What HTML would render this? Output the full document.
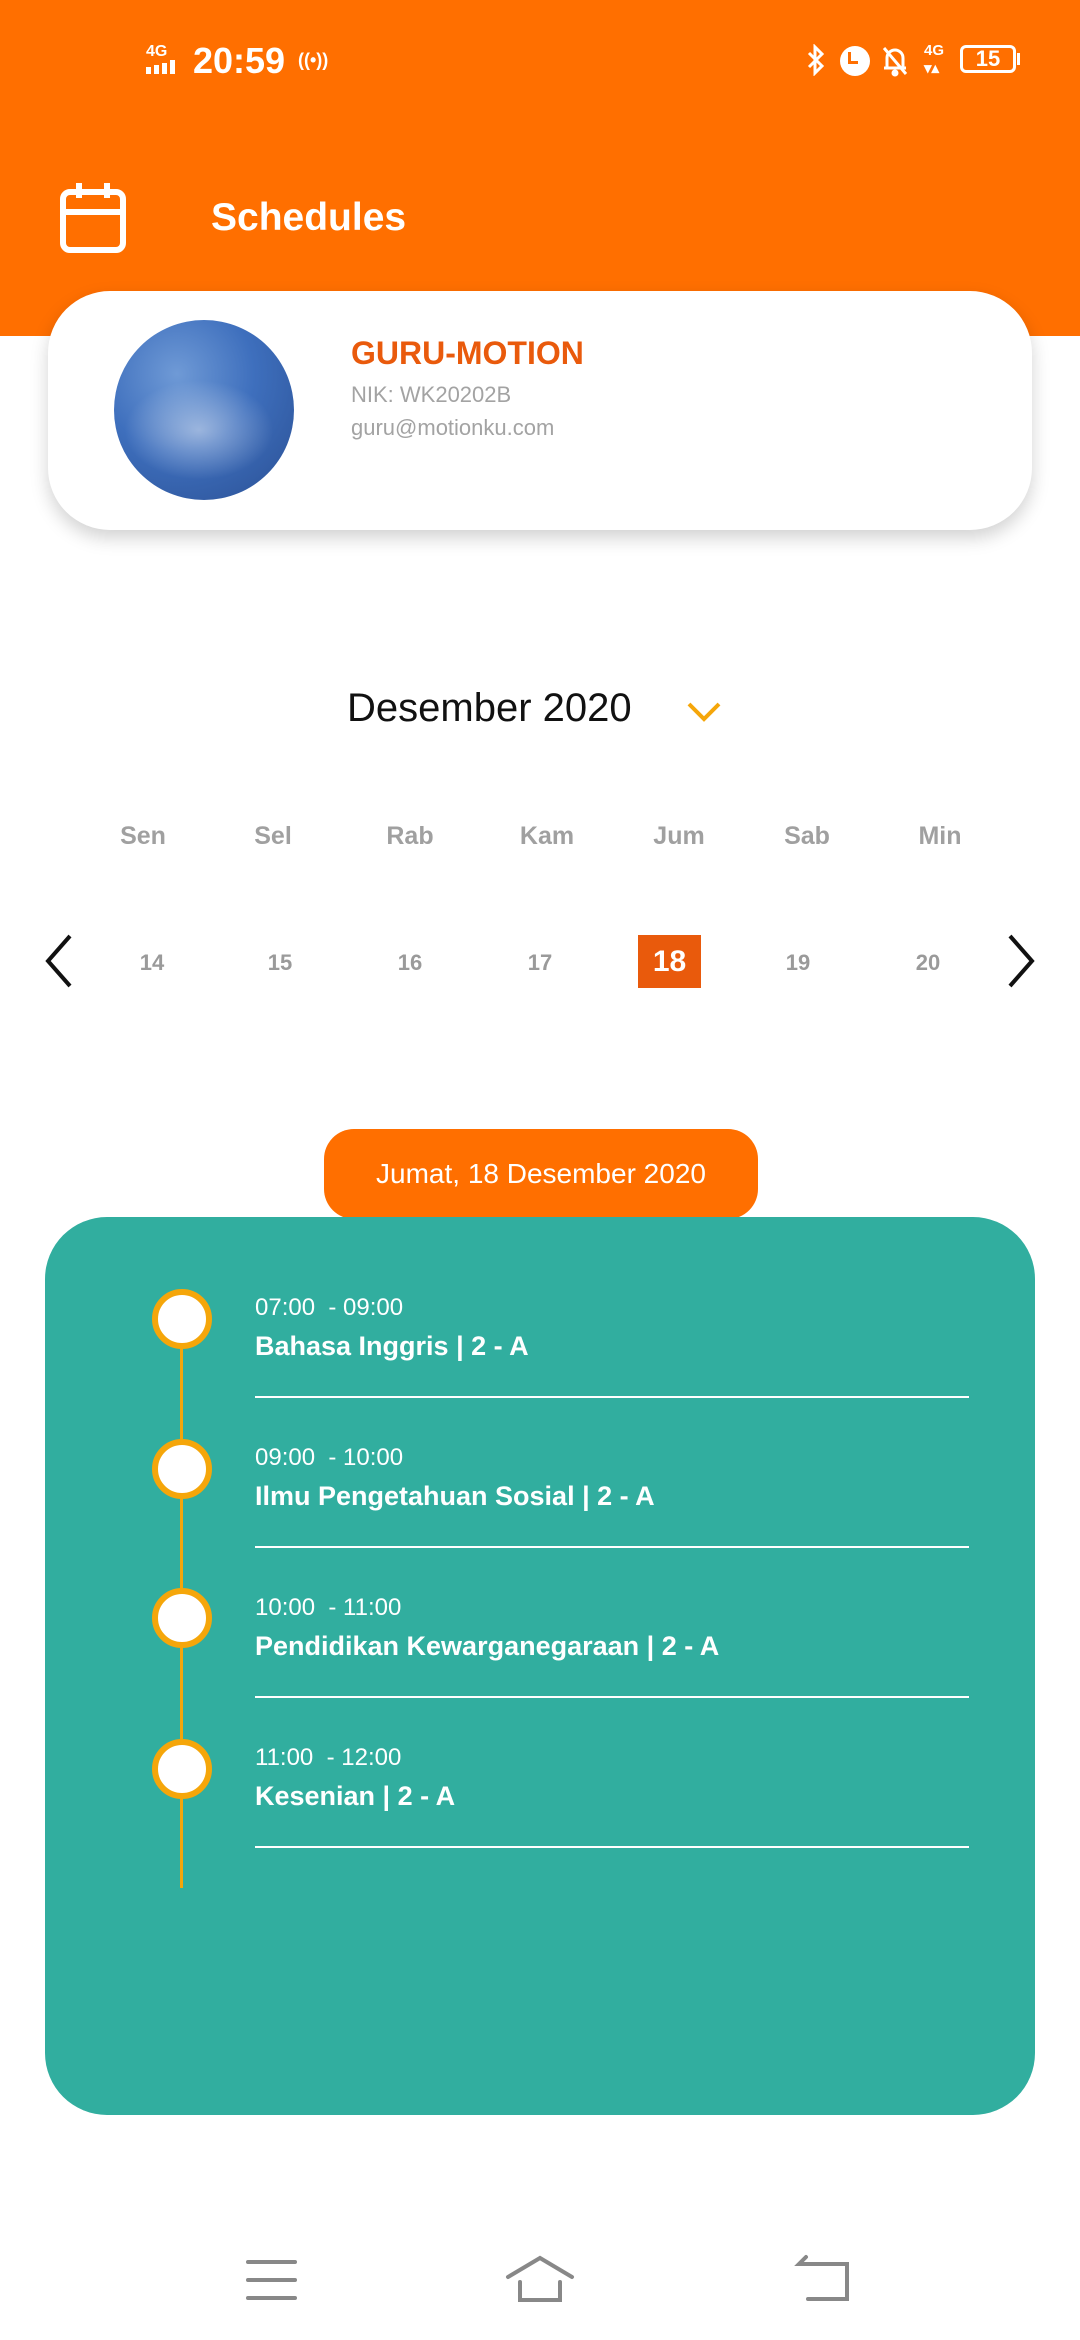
<!DOCTYPE html>
<html><head><meta charset="utf-8"><style>
*{margin:0;padding:0;box-sizing:border-box}
body{width:1080px;height:2340px;position:relative;background:#fff;font-family:"Liberation Sans",sans-serif;overflow:hidden}
.a{position:absolute}
.hdr{left:0;top:0;width:1080px;height:336px;background:#ff6f00}
.card{left:48px;top:291px;width:984px;height:239px;background:#fff;border-radius:62px;box-shadow:0 8px 18px rgba(0,0,0,.18)}
.day{top:822px;width:100px;margin-left:-50px;text-align:center;font-size:25px;font-weight:bold;color:#a0a0a0}
.dt{top:950px;width:80px;margin-left:-40px;text-align:center;font-size:22px;font-weight:bold;color:#9a9a9a}
.teal{left:45px;top:1217px;width:990px;height:898px;background:#31ae9f;border-radius:62px}
.circ{left:152px;width:60px;height:60px;border-radius:50%;background:#fff;border:6px solid #f5a60a}
.tm{left:255px;font-size:24px;color:#fff}
.sb{left:255px;font-size:27px;color:#fff;font-weight:bold}
.ln{left:255px;width:714px;height:2px;background:#fff}
</style></head><body>
<div class="a hdr"></div>
<div class="a" style="left:146px;top:44px;color:#fff;font-size:16px;font-weight:bold;line-height:16px">4G</div>
<div class="a" style="left:146px;top:60px;width:32px;height:14px">
<div class="a" style="left:0;top:7px;width:5px;height:7px;background:#fff"></div>
<div class="a" style="left:8px;top:5px;width:5px;height:9px;background:#fff"></div>
<div class="a" style="left:16px;top:3px;width:5px;height:11px;background:#fff"></div>
<div class="a" style="left:24px;top:0;width:5px;height:14px;background:#fff"></div></div>
<div class="a" style="left:193px;top:40px;color:#fff;font-size:36px;font-weight:bold">20:59</div>
<div class="a" style="left:298px;top:50px;color:#fff;font-size:18px;font-weight:bold">((•))</div>
<svg class="a" style="left:806px;top:44px" width="20" height="32" fill="none" stroke="#fff" stroke-width="3"><polyline points="3,9 16,22 9,29 9,3 16,10 3,23"/></svg>
<div class="a" style="left:840px;top:46px;width:30px;height:30px;border-radius:50%;background:#fff"></div>
<div class="a" style="left:848px;top:52px;width:10px;height:12px;border-left:3px solid #ff6f00;border-bottom:3px solid #ff6f00"></div>
<svg class="a" style="left:880px;top:44px" width="30" height="34" fill="none" stroke="#fff" stroke-width="3"><path d="M7,24 V14 a8,8 0 0 1 16,0 V24 H4 M26,24 H24"/><line x1="4" y1="4" x2="26" y2="30"/><circle cx="15" cy="29" r="2" fill="#fff"/></svg>
<div class="a" style="left:924px;top:42px;color:#fff;font-size:15px;font-weight:bold">4G<br>▾▴</div>
<div class="a" style="left:960px;top:45px;width:56px;height:28px;border:3px solid #fff;border-radius:6px;color:#fff;font-size:22px;font-weight:bold;text-align:center;line-height:22px">15</div>
<div class="a" style="left:1017px;top:53px;width:3px;height:12px;background:#fff"></div>
<svg class="a" style="left:58px;top:180px" width="72" height="74" viewBox="0 0 72 74"><rect x="5" y="12" width="60" height="58" rx="7" fill="none" stroke="#fff" stroke-width="6"/><line x1="5" y1="32" x2="65" y2="32" stroke="#fff" stroke-width="6"/><line x1="21" y1="3" x2="21" y2="18" stroke="#fff" stroke-width="6"/><line x1="49" y1="3" x2="49" y2="18" stroke="#fff" stroke-width="6"/></svg>
<div class="a" style="left:211px;top:196px;color:#fff;font-size:39px;font-weight:bold">Schedules</div>
<div class="a card"></div>
<div class="a" style="left:114px;top:320px;width:180px;height:180px;border-radius:50%;background:radial-gradient(circle at 35% 30%,#6f9ad6,#3e6fbd 45%,#2a4f93 100%)"></div>
<div class="a" style="left:124px;top:380px;width:150px;height:100px;border-radius:50%;background:radial-gradient(ellipse,rgba(255,255,255,.45),rgba(255,255,255,0) 70%)"></div>
<div class="a" style="left:351px;top:335px;color:#e95a0c;font-size:32px;font-weight:bold">GURU-MOTION</div>
<div class="a" style="left:351px;top:382px;color:#a3a3a3;font-size:22px">NIK: WK20202B</div>
<div class="a" style="left:351px;top:415px;color:#a3a3a3;font-size:22px">guru@motionku.com</div>
<div class="a" style="left:347px;top:686px;color:#111;font-size:40px">Desember 2020</div>
<svg class="a" style="left:686px;top:700px" width="36" height="24"><polyline points="3,4 18,19 33,4" fill="none" stroke="#f5a60a" stroke-width="4"/></svg>
<div class="a day" style="left:143px">Sen</div><div class="a day" style="left:273px">Sel</div><div class="a day" style="left:410px">Rab</div><div class="a day" style="left:547px">Kam</div><div class="a day" style="left:679px">Jum</div><div class="a day" style="left:807px">Sab</div><div class="a day" style="left:940px">Min</div>
<svg class="a" style="left:40px;top:932px" width="36" height="58"><polyline points="30,4 8,29 30,54" fill="none" stroke="#111" stroke-width="4"/></svg>
<svg class="a" style="left:1004px;top:932px" width="36" height="58"><polyline points="6,4 28,29 6,54" fill="none" stroke="#111" stroke-width="4"/></svg>
<div class="a dt" style="left:152px">14</div><div class="a dt" style="left:280px">15</div><div class="a dt" style="left:410px">16</div><div class="a dt" style="left:540px">17</div><div class="a dt" style="left:798px">19</div><div class="a dt" style="left:928px">20</div>
<div class="a" style="left:638px;top:935px;width:63px;height:53px;background:#e95a0c;color:#fff;font-size:30px;font-weight:bold;text-align:center;line-height:53px">18</div>
<div class="a" style="left:324px;top:1129px;width:434px;height:90px;background:#ff6f00;border-radius:30px;color:#fff;font-size:28px;text-align:center;line-height:90px">Jumat, 18 Desember 2020</div>
<div class="a teal"></div>
<div class="a" style="left:180px;top:1330px;width:3px;height:558px;background:#f5a60a"></div>
<div class="a circ" style="top:1289px"></div><div class="a circ" style="top:1439px"></div><div class="a circ" style="top:1588px"></div><div class="a circ" style="top:1739px"></div>
<div class="a tm" style="top:1294px">07:00&nbsp; - 09:00</div><div class="a sb" style="top:1331px">Bahasa Inggris | 2 - A</div><div class="a ln" style="top:1396px"></div>
<div class="a tm" style="top:1444px">09:00&nbsp; - 10:00</div><div class="a sb" style="top:1481px">Ilmu Pengetahuan Sosial | 2 - A</div><div class="a ln" style="top:1546px"></div>
<div class="a tm" style="top:1594px">10:00&nbsp; - 11:00</div><div class="a sb" style="top:1631px">Pendidikan Kewarganegaraan | 2 - A</div><div class="a ln" style="top:1696px"></div>
<div class="a tm" style="top:1744px">11:00&nbsp; - 12:00</div><div class="a sb" style="top:1781px">Kesenian | 2 - A</div><div class="a ln" style="top:1846px"></div>
<svg class="a" style="left:240px;top:2250px" width="620" height="60" fill="none" stroke="#888" stroke-width="4" stroke-linecap="round">
<line x1="8" y1="12" x2="55" y2="12"/><line x1="8" y1="30" x2="55" y2="30"/><line x1="8" y1="48" x2="55" y2="48"/>
<polyline points="268,27 300,8 332,27"/><polyline points="280,32 280,50 320,50 320,32"/>
<polyline points="560,14 607,14 607,49 568,49"/><polyline points="566,7 559,14 566,14"/>
</svg>
</body></html>
